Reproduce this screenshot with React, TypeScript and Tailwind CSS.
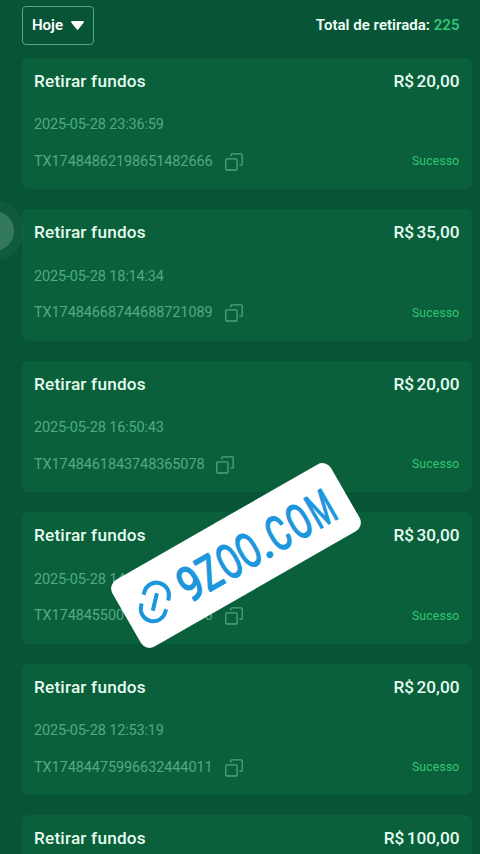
type Withdrawal = {
  date: string;
  tx: string;
  amount: string;
};

const withdrawals: Withdrawal[] = [
  { date: "2025-05-28 23:36:59", tx: "TX17484862198651482666", amount: "20,00" },
  { date: "2025-05-28 18:14:34", tx: "TX17484668744688721089", amount: "35,00" },
  { date: "2025-05-28 16:50:43", tx: "TX1748461843748365078", amount: "20,00" },
  { date: "2025-05-28 14:55:01", tx: "TX17484550011284630216", amount: "30,00" },
  { date: "2025-05-28 12:53:19", tx: "TX17484475996632444011", amount: "20,00" },
  { date: "2025-05-28 11:20:46", tx: "TX17484420466318274502", amount: "100,00" },
];

// Each letter is condensed on its own: centre x and horizontal scale
const stickerLetters = [
  { char: "9", x: -53.5, scale: 0.84 },
  { char: "Z", x: -31.5, scale: 0.72 },
  { char: "O", x: -9, scale: 0.66 },
  { char: "O", x: 13, scale: 0.66 },
  { char: ".", x: 30, scale: 1 },
  { char: "C", x: 47.5, scale: 0.68 },
  { char: "O", x: 71.5, scale: 0.66 },
  { char: "M", x: 97, scale: 0.58 },
];

function CopyIcon() {
  return (
    <svg width="18" height="18" viewBox="0 0 18 18" fill="none" stroke="#4aa67b" strokeWidth="1.3">
      <rect x="0.8" y="5.8" width="11.2" height="11.2" rx="1" />
      <path d="M5.8 3.4V1.8a1 1 0 0 1 1-1h9.4a1 1 0 0 1 1 1v9.4a1 1 0 0 1-1 1h-1.8" />
    </svg>
  );
}

function WithdrawalCard({ date, tx, amount }: Withdrawal) {
  return (
    <div className="flex h-[131.5px] shrink-0 flex-col rounded-md bg-[#09603b] pl-3 pr-[12.5px] pt-3">
      <div className="flex h-6 items-center justify-between text-[17.2px] font-medium text-[#e6fbef]">
        <span className="tracking-[0.2px]">Retirar fundos</span>
        <span className="flex gap-[2.5px]">
          <span>R$</span>
          <span>{amount}</span>
        </span>
      </div>
      <div className="mt-[21.5px] h-5 text-[14.5px] leading-5 tracking-[-0.15px] text-[#4fab80]">{date}</div>
      <div className="mt-[16.5px] flex h-5 items-center justify-between">
        <div className="flex items-center gap-3 text-[14.5px] tracking-[-0.1px] text-[#4fab80]">
          <span>{tx}</span>
          <CopyIcon />
        </div>
        <span className="text-[12.2px] tracking-[0.18px] text-[#36c477]">Sucesso</span>
      </div>
    </div>
  );
}

function LinkSticker() {
  return (
    <div className="absolute left-[109.500px] top-[516.500px] h-[77px] w-[252px] -rotate-[29.8deg] rounded-[10px] bg-white">
      <svg width="252" height="77" viewBox="-126 -38.5 252 77" fill="none" stroke="#1c96dc">
        <g transform="translate(-93.5 0) rotate(43)" strokeWidth="4" strokeLinecap="butt">
          <path d="M-12.5 -4.5V-7a12.5 12.5 0 0 1 25 0V-4.5" />
          <path d="M-12.5 4.5V7a12.5 12.5 0 0 0 25 0V4.5" />
          <path d="M0 -9V9" />
        </g>
        <g fill="#1c96dc" className="font-['Roboto',sans-serif] text-[48px] font-normal" textAnchor="middle" strokeWidth="1.6" strokeLinejoin="round">
          {stickerLetters.map(({ char, x, scale }, i) => (
            <text key={i} transform={`translate(${x} 18.5) scale(${scale} 1)`}>
              {char}
            </text>
          ))}
        </g>
      </svg>
    </div>
  );
}

export default function App() {
  return (
    <div className="relative h-[854px] w-[480px] overflow-hidden bg-[#075436] font-['Roboto',sans-serif]">
      <div className="flex flex-col pl-[22px] pr-2 pt-[5.5px]">
        <div className="flex h-[39px] items-center justify-between pr-[12.5px] text-[15px]">
          <button className="flex h-[39px] w-[72px] items-center justify-between rounded border border-[#4fab80] pl-[9px] pr-[9px] font-semibold text-white">
            Hoje
            <svg width="13" height="9" viewBox="0 0 13 9" fill="white">
              <path d="M1.2 0h10.6c1 0 1.4 1 .8 1.7L7.4 8.2a1.2 1.2 0 0 1-1.8 0L.4 1.7C-.2 1 .2 0 1.2 0z" />
            </svg>
          </button>
          <div className="font-semibold tracking-[0.03px] text-[#f0fff7]">
            Total de retirada: <span className="text-[#36c477]">225</span>
          </div>
        </div>
        <div className="mt-[13px] flex flex-col gap-5">
          {withdrawals.map((item) => (
            <WithdrawalCard key={item.tx} {...item} />
          ))}
        </div>
      </div>

      {/* Floating assistive button, mostly off screen */}
      <div className="absolute -left-[37px] top-[200px] flex size-[61px] items-center justify-center rounded-full bg-white/4">
        <div className="size-[40px] rounded-full bg-[#34795c]" />
      </div>

      <LinkSticker />
    </div>
  );
}
